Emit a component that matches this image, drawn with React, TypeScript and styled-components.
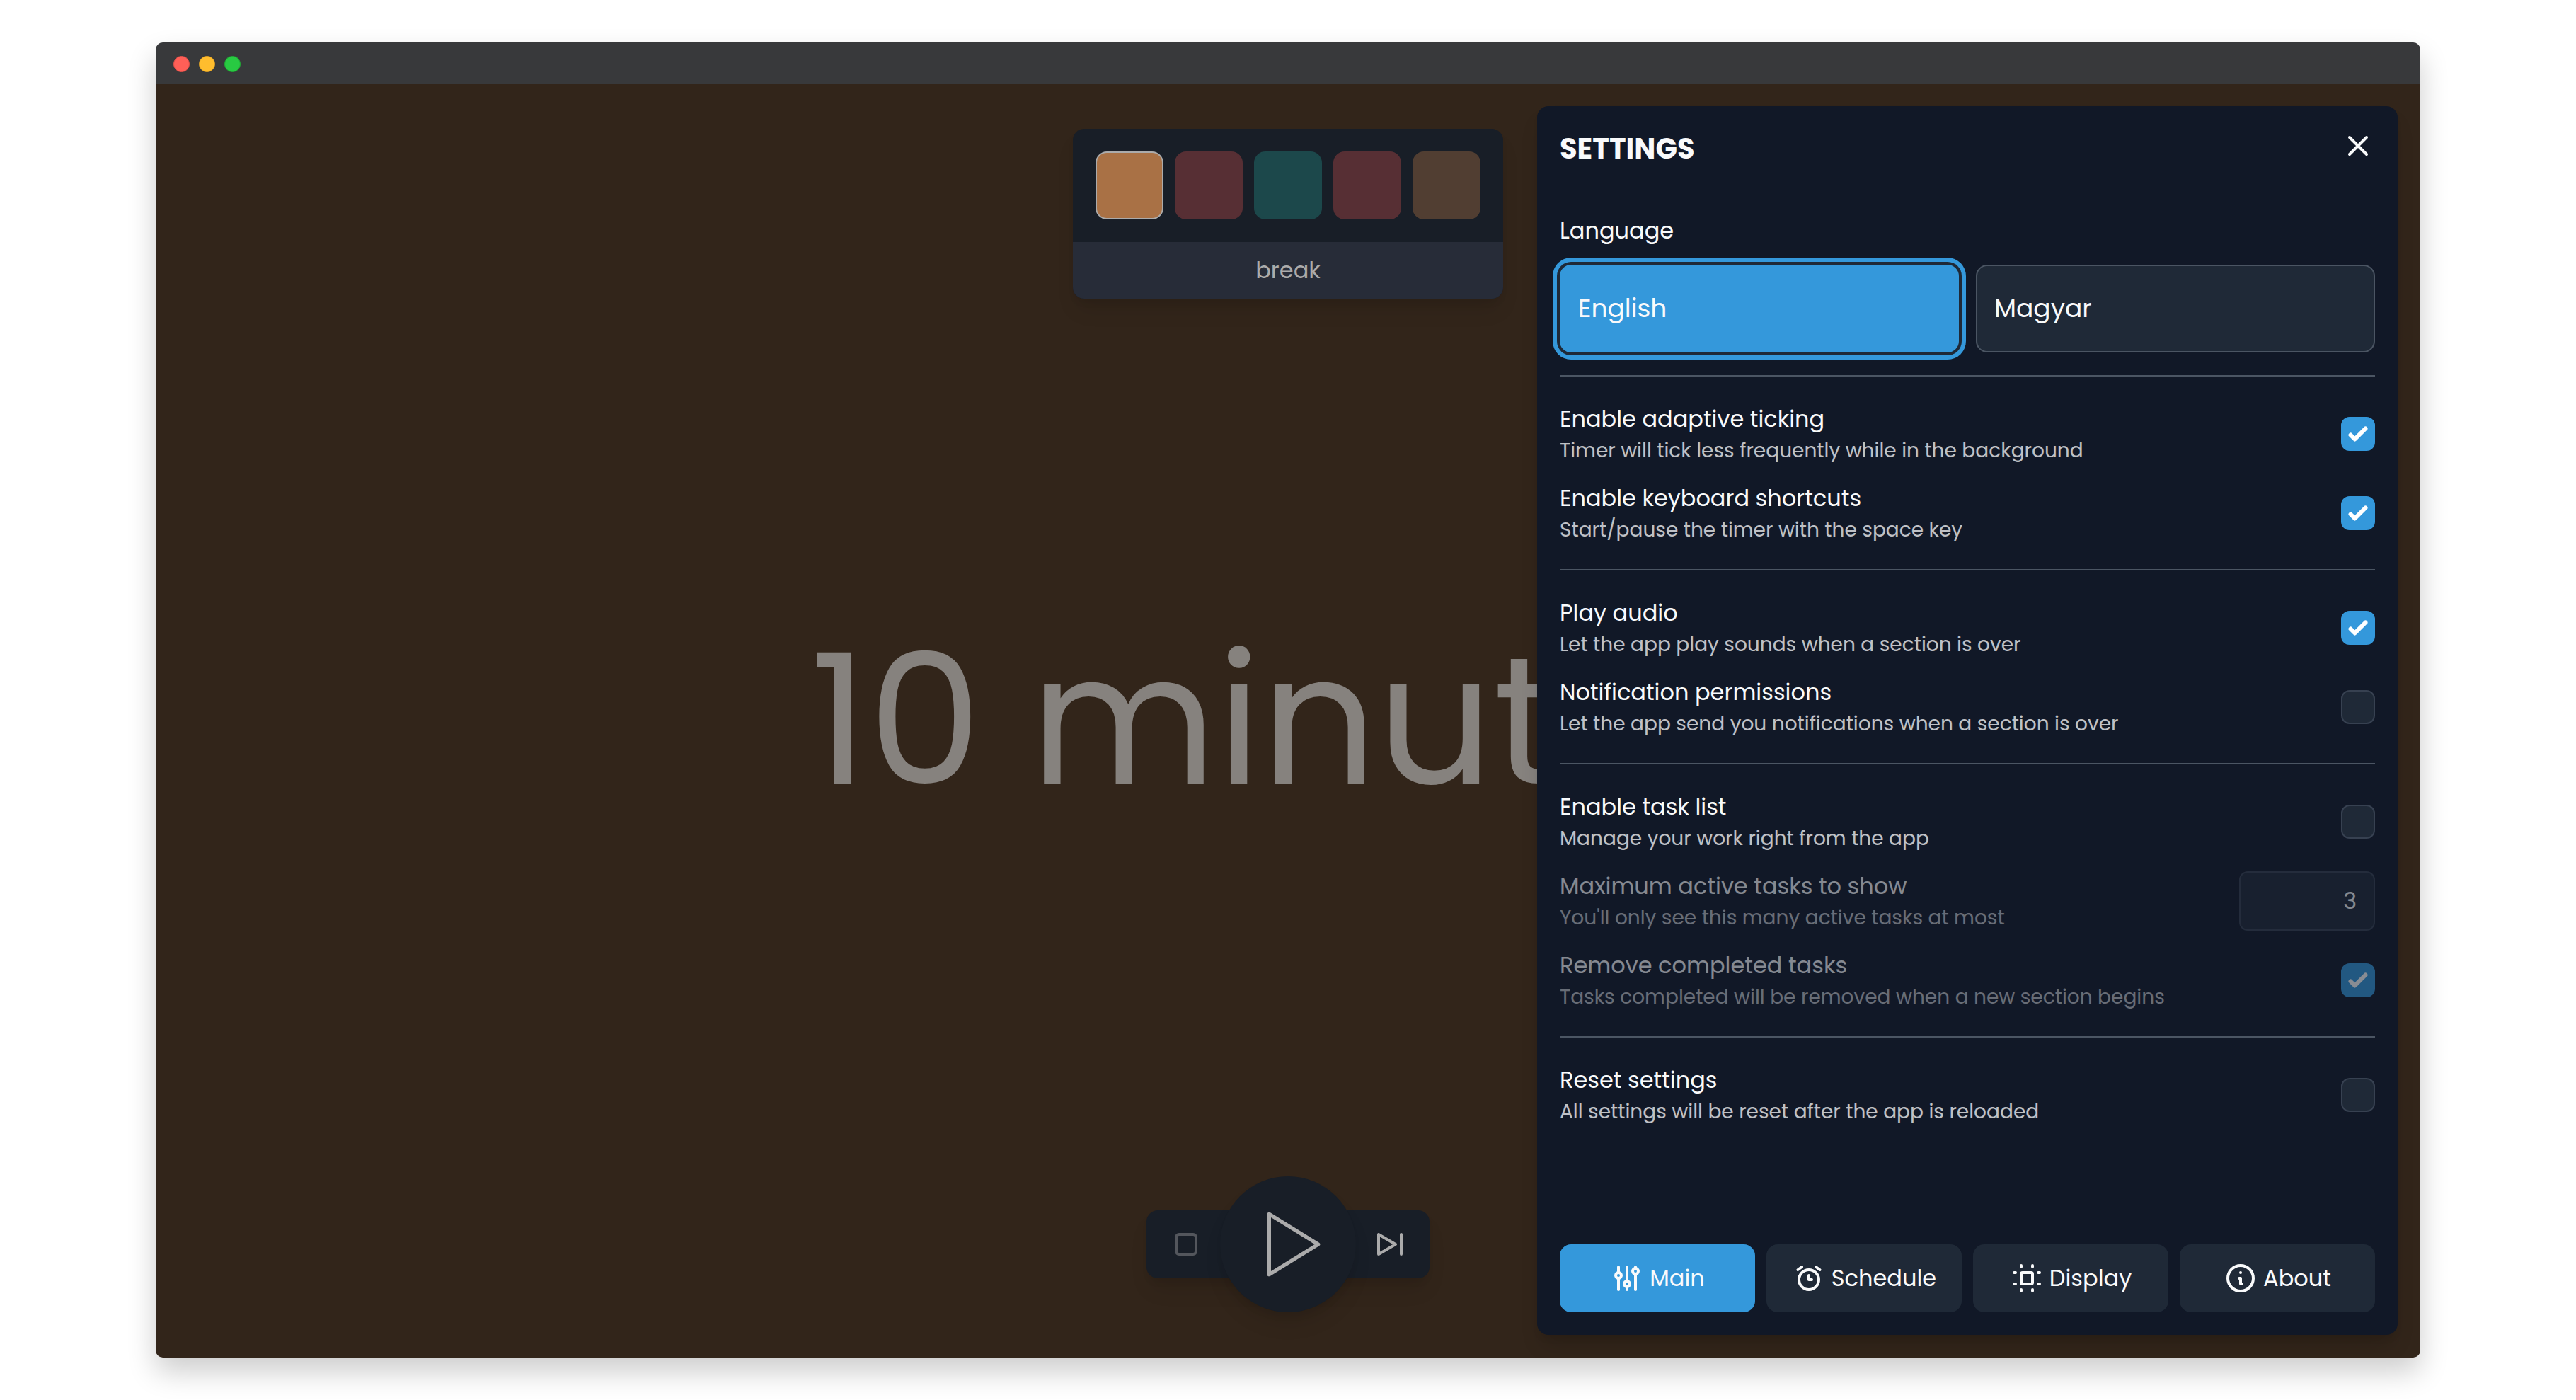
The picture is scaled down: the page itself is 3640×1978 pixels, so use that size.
import React, { useState } from "react";
import styled, { createGlobalStyle } from "styled-components";

const color = {
  page: "#ffffff",
  titleBar: "#38393b",
  stage: "#32251a",
  dimCard: "#181e27",
  dimFooter: "#272c38",
  dimText: "#ababab",
  panel: "#111827",
  field: "#1f2937",
  fieldBorder: "#374151",
  line: "#4b5563",
  blue: "#3498db",
  text: "#f9fafb",
};

const GlobalStyle = createGlobalStyle`
  *, *::before, *::after { box-sizing: border-box; }
  body {
    margin: 0;
    background: ${color.page};
    font-family: Poppins, Inter, sans-serif;
    font-size: 32px;
    line-height: 48px;
    color: ${color.text};
  }
  button, input { font: inherit; color: inherit; }
`;

const Page = styled.div`
  display: flex;
  min-height: 100vh;
  padding: 60px 220px;
`;

const AppWindow = styled.div`
  flex: 1;
  display: flex;
  flex-direction: column;
  min-width: 0;
  border-radius: 10px;
  overflow: hidden;
  box-shadow: 0 20px 40px rgba(0, 0, 0, 0.2);
`;

const TitleBar = styled.div`
  display: flex;
  align-items: center;
  gap: 13px;
  height: 58px;
  padding: 3px 25px 0;
  background: ${color.titleBar};
`;

const Light = styled.span<{ $fill: string; $edge: string }>`
  width: 23px;
  height: 23px;
  border-radius: 50%;
  border: 1px solid ${(p) => p.$edge};
  background: ${(p) => p.$fill};
`;

const Stage = styled.main`
  position: relative;
  flex: 1;
  display: grid;
  grid-template-rows: 1fr auto 1fr;
  justify-items: center;
  padding: 64px;
  background: ${color.stage};
`;

const shadow = "0 20px 30px -6px rgba(0, 0, 0, 0.1), 0 8px 12px -4px rgba(0, 0, 0, 0.08)";

const SectionCard = styled.section`
  align-self: start;
  border-radius: 16px;
  overflow: hidden;
  background: ${color.dimCard};
  box-shadow: ${shadow};
`;

const Swatches = styled.div`
  display: flex;
  gap: 16px;
  padding: 32px;
`;

const Swatch = styled.span<{ $fill: string; $active?: boolean }>`
  width: 96px;
  height: 96px;
  border-radius: 16px;
  border: 2px solid ${(p) => (p.$active ? color.dimText : p.$fill)};
  background: ${(p) => p.$fill};
`;

const SectionName = styled.div`
  padding: 16px 32px;
  background: ${color.dimFooter};
  color: ${color.dimText};
  text-align: center;
`;

const Remaining = styled.div`
  font-size: 256px;
  line-height: 256px;
  white-space: nowrap;
  color: #86827e;
`;

const Controls = styled.div`
  align-self: end;
  display: flex;
  align-items: center;
  justify-content: space-between;
  width: 400px;
  height: 96px;
  margin-bottom: 48px;
  border-radius: 16px;
  background: ${color.dimCard};
  color: ${color.dimText};
  box-shadow: ${shadow};
`;

const ControlButton = styled.button<{ $dim?: boolean }>`
  display: grid;
  place-items: center;
  width: 112px;
  height: 96px;
  padding: 0;
  border: 0;
  background: none;
  opacity: ${(p) => (p.$dim ? 0.4 : 1)};
`;

const PlayButton = styled.button`
  display: grid;
  place-items: center;
  flex: none;
  width: 192px;
  height: 192px;
  margin: 0 -8px;
  padding: 0;
  border: 0;
  border-radius: 50%;
  background: ${color.dimCard};
  box-shadow: ${shadow};
`;

const Panel = styled.aside`
  position: absolute;
  inset: 32px 32px 32px auto;
  display: flex;
  flex-direction: column;
  width: 1216px;
  max-width: calc(100% - 64px);
  padding: 32px;
  border-radius: 16px;
  background: ${color.panel};
  box-shadow: 0 20px 30px -6px rgba(0, 0, 0, 0.14), 0 8px 12px -4px rgba(0, 0, 0, 0.08);
`;

const PanelHeader = styled.header`
  display: flex;
  align-items: flex-start;
  justify-content: space-between;
  margin-bottom: 64px;
`;

const PanelTitle = styled.h1`
  margin: 0;
  font-size: 40px;
  line-height: 56px;
  font-weight: 700;
`;

const CloseButton = styled.button`
  display: grid;
  padding: 0;
  border: 0;
  background: none;
`;

const Group = styled.div`
  display: flex;
  flex-direction: column;
  gap: 14px;
  padding: 32px 0 30px;
  border-top: 2px solid ${color.line};
`;

const Languages = styled.fieldset`
  display: grid;
  grid-template-columns: 1fr 1fr;
  gap: 24px;
  margin: 0 0 32px;
  padding: 0;
  border: 0;
`;

const Legend = styled.legend`
  margin-bottom: 24px;
  padding: 0;
`;

const LanguageButton = styled.button<{ $active: boolean }>`
  height: 124px;
  padding: 0 24px;
  border: 2px solid ${(p) => (p.$active ? color.blue : color.line)};
  border-radius: 16px;
  background: ${(p) => (p.$active ? color.blue : color.field)};
  box-shadow: ${(p) => (p.$active ? `0 0 0 4px ${color.field}, 0 0 0 10px ${color.blue}` : "none")};
  font-size: 36px;
  text-align: left;
`;

const Row = styled.label<{ $disabled?: boolean }>`
  display: flex;
  align-items: center;
  justify-content: space-between;
  gap: 32px;
  min-height: 98px;
  opacity: ${(p) => (p.$disabled ? 0.5 : 1)};
`;

const RowText = styled.span`
  display: flex;
  flex-direction: column;
`;

const Description = styled.span`
  font-size: 28px;
  line-height: 42px;
  opacity: 0.75;
`;

const CheckFrame = styled.span`
  display: grid;
  flex: none;
  > * { grid-area: 1 / 1; }
  svg { pointer-events: none; }
`;

const CheckInput = styled.input`
  appearance: none;
  width: 48px;
  height: 48px;
  margin: 0;
  border: 2px solid ${color.fieldBorder};
  border-radius: 12px;
  background: ${color.field};
  & + svg { visibility: hidden; }
  &:checked { border-color: ${color.blue}; background: ${color.blue}; }
  &:checked + svg { visibility: visible; }
`;

const NumberInput = styled.input`
  appearance: textfield;
  width: 192px;
  height: 84px;
  padding: 0 24px;
  border: 2px solid ${color.fieldBorder};
  border-radius: 12px;
  background: ${color.field};
  text-align: right;
  &::-webkit-inner-spin-button { appearance: none; margin: 0; }
`;

const Tabs = styled.nav`
  display: grid;
  grid-template-columns: repeat(4, 1fr);
  gap: 16px;
  margin-top: auto;
`;

const Tab = styled.button<{ $active: boolean }>`
  display: flex;
  align-items: center;
  justify-content: center;
  gap: 8px;
  height: 96px;
  padding: 0;
  border: 0;
  border-radius: 16px;
  background: ${(p) => (p.$active ? color.blue : color.field)};
`;

const Glyph = ({ size = 48, weight = 2, children }: { size?: number; weight?: number; children: React.ReactNode }) => (
  <svg
    width={size}
    height={size}
    viewBox="0 0 24 24"
    fill="none"
    stroke="currentColor"
    strokeWidth={weight}
    strokeLinecap="round"
    strokeLinejoin="round"
    aria-hidden="true"
  >
    {children}
  </svg>
);

const CheckMark = () => (
  <svg width="48" height="48" viewBox="0 0 16 16" fill="#fff" aria-hidden="true">
    <path d="M12.207 4.793a1 1 0 010 1.414l-5 5a1 1 0 01-1.414 0l-2-2a1 1 0 011.414-1.414L6.5 9.086l4.293-4.293a1 1 0 011.414 0z" />
  </svg>
);

type Setting = {
  id: string;
  title: string;
  about: string;
  on?: boolean;
  value?: number;
  disabled?: boolean;
};

const groups: Setting[][] = [
  [
    { id: "ticking", title: "Enable adaptive ticking", about: "Timer will tick less frequently while in the background", on: true },
    { id: "keys", title: "Enable keyboard shortcuts", about: "Start/pause the timer with the space key", on: true },
  ],
  [
    { id: "audio", title: "Play audio", about: "Let the app play sounds when a section is over", on: true },
    { id: "notify", title: "Notification permissions", about: "Let the app send you notifications when a section is over" },
  ],
  [
    { id: "tasks", title: "Enable task list", about: "Manage your work right from the app" },
    { id: "max", title: "Maximum active tasks to show", about: "You'll only see this many active tasks at most", value: 3, disabled: true },
    { id: "remove", title: "Remove completed tasks", about: "Tasks completed will be removed when a new section begins", on: true, disabled: true },
  ],
  [{ id: "reset", title: "Reset settings", about: "All settings will be reset after the app is reloaded" }],
];

const SettingRow = ({ id, title, about, on, value, disabled }: Setting) => (
  <Row htmlFor={id} $disabled={disabled}>
    <RowText>
      <span>{title}</span>
      <Description>{about}</Description>
    </RowText>
    {value !== undefined ? (
      <NumberInput id={id} type="number" defaultValue={value} disabled={disabled} />
    ) : (
      <CheckFrame>
        <CheckInput id={id} type="checkbox" defaultChecked={on} disabled={disabled} />
        <CheckMark />
      </CheckFrame>
    )}
  </Row>
);

const tabs = [
  {
    name: "Main",
    icon: (
      <>
        <circle cx="6" cy="10" r="2" />
        <path d="M6 4v4M6 12v8" />
        <circle cx="12" cy="16" r="2" />
        <path d="M12 4v10M12 18v2" />
        <circle cx="18" cy="7" r="2" />
        <path d="M18 4v1M18 9v11" />
      </>
    ),
  },
  {
    name: "Schedule",
    icon: (
      <>
        <circle cx="12" cy="13" r="7" />
        <path d="M12 10v3h2M7 4L4.25 6M17 4l2.75 2" />
      </>
    ),
  },
  {
    name: "Display",
    icon: (
      <>
        <rect x="8" y="8" width="8" height="8" rx="1" />
        <path d="M3 8h1M3 16h1M8 3v1M16 3v1M20 8h1M20 16h1M8 20v1M16 20v1" />
      </>
    ),
  },
  {
    name: "About",
    icon: (
      <>
        <circle cx="12" cy="12" r="9" />
        <path d="M12 8h.01M11 12h1v4h1" />
      </>
    ),
  },
];

const swatches = ["#a97145", "#572f34", "#1c484b", "#572f34", "#513e32"];

export default function App() {
  const [language, setLanguage] = useState("English");
  const [tab, setTab] = useState("Main");

  return (
    <>
      <GlobalStyle />
      <Page>
        <AppWindow>
          <TitleBar>
            <Light $fill="#ff5f57" $edge="#e2504a" />
            <Light $fill="#ffbd2e" $edge="#dfa123" />
            <Light $fill="#28ca42" $edge="#1fab34" />
          </TitleBar>
          <Stage>
            <SectionCard>
              <Swatches>
                {swatches.map((fill, i) => (
                  <Swatch key={i} $fill={fill} $active={i === 0} />
                ))}
              </Swatches>
              <SectionName>break</SectionName>
            </SectionCard>
            <Remaining>10 minutes</Remaining>
            <Controls>
              <ControlButton $dim aria-label="Stop">
                <Glyph>
                  <rect x="5" y="5" width="14" height="14" rx="2" />
                </Glyph>
              </ControlButton>
              <PlayButton aria-label="Play">
                <Glyph size={128} weight={1}>
                  <path d="M7 4v16l13-8z" />
                </Glyph>
              </PlayButton>
              <ControlButton aria-label="Skip">
                <Glyph>
                  <path d="M4 5v14l12-7zM20 5v14" />
                </Glyph>
              </ControlButton>
            </Controls>
            <Panel>
              <PanelHeader>
                <PanelTitle>SETTINGS</PanelTitle>
                <CloseButton aria-label="Close">
                  <Glyph>
                    <path d="M18 6L6 18M6 6l12 12" />
                  </Glyph>
                </CloseButton>
              </PanelHeader>
              <Languages>
                <Legend>Language</Legend>
                {["English", "Magyar"].map((name) => (
                  <LanguageButton key={name} type="button" $active={name === language} onClick={() => setLanguage(name)}>
                    {name}
                  </LanguageButton>
                ))}
              </Languages>
              {groups.map((rows) => (
                <Group key={rows[0].id}>
                  {rows.map((row) => (
                    <SettingRow key={row.id} {...row} />
                  ))}
                </Group>
              ))}
              <Tabs>
                {tabs.map(({ name, icon }) => (
                  <Tab key={name} type="button" $active={name === tab} onClick={() => setTab(name)}>
                    <Glyph>{icon}</Glyph>
                    {name}
                  </Tab>
                ))}
              </Tabs>
            </Panel>
          </Stage>
        </AppWindow>
      </Page>
    </>
  );
}
